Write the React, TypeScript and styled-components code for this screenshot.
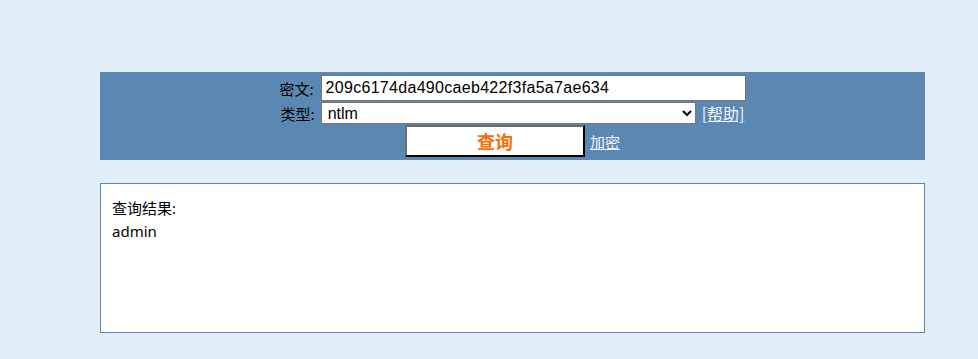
import React from "react";
import styled, { createGlobalStyle } from "styled-components";

const Global = createGlobalStyle`
  html, body { margin: 0; padding: 0; }
  body {
    background: #e1eef7;
    font-family: "Liberation Sans", Arial, "Noto Sans CJK SC", sans-serif;
    color: #000;
  }
`;

const Page = styled.div`
  padding: 72px 53px 0 100px;
  display: flex;
  flex-direction: column;
  gap: 23px;
  width: 825px;
`;

const Panel = styled.form`
  background: #5b88b3;
  display: flex;
  flex-direction: column;
  align-items: center;
  padding: 3px 0 3px;
  gap: 1px;
`;

const Row = styled.div`
  display: flex;
  align-items: center;
  gap: 6px;
`;

const Label = styled.label`
  font-size: 15px;
  font-family: "Noto Sans CJK SC", "Liberation Sans", sans-serif;
  color: #000;
`;

const TextInput = styled.input`
  box-sizing: border-box;
  width: 425px;
  height: 26px;
  border: 1px solid #767676;
  padding: 0 4px;
  font-size: 16px;
  letter-spacing: 0.3px;
  font-family: "Liberation Sans", Arial, sans-serif;
  background: #fff;
  outline: none;
  margin-left: 1px;
`;

const Select = styled.select`
  box-sizing: border-box;
  width: 375px;
  height: 22px;
  border: 1px solid #767676;
  border-radius: 0;
  padding: 0 2px;
  font-size: 16px;
  font-family: "Liberation Sans", Arial, sans-serif;
  background: #fff;
  color: #000;
`;

const Link = styled.a<{ $size?: number }>`
  color: #f2f6ff;
  font-size: ${(p) => p.$size ?? 16}px;
  font-family: "Noto Sans CJK SC", "Liberation Sans", sans-serif;
  text-decoration: underline;
  line-height: 1;
`;

const SubmitButton = styled.button`
  box-sizing: border-box;
  width: 180px;
  height: 32px;
  background: #fff;
  border: 2px solid;
  border-color: #6b6b6b #000 #000 #6b6b6b;
  color: #ff6a00;
  font-weight: bold;
  font-size: 18px;
  font-family: "Noto Sans CJK SC", sans-serif;
  padding: 0;
  line-height: 1;
  margin-right: -1px;
`;

const ResultBox = styled.div`
  box-sizing: border-box;
  height: 150px;
  background: #fff;
  border: 1px solid #5b88b3;
  padding: 13px 11px;
  font-size: 15px;
  font-family: "Noto Sans", "Noto Sans CJK SC", sans-serif;
  line-height: 23px;
`;

export default function App() {
  return (
    <>
      <Global />
      <Page>
        <Panel onSubmit={(e) => e.preventDefault()}>
          <Row>
            <Label>密文:</Label>
            <TextInput defaultValue="209c6174da490caeb422f3fa5a7ae634" />
          </Row>
          <Row>
            <Label>类型:</Label>
            <Select defaultValue="ntlm">
              <option value="ntlm">ntlm</option>
              <option value="md5">md5</option>
            </Select>
            <Link href="#" $size={16}>[帮助]</Link>
          </Row>
          <Row>
            <SubmitButton type="submit">查询</SubmitButton>
            <Link href="#" $size={15}>加密</Link>
          </Row>
        </Panel>
        <ResultBox>
          <div>查询结果:</div>
          <div>admin</div>
        </ResultBox>
      </Page>
    </>
  );
}
